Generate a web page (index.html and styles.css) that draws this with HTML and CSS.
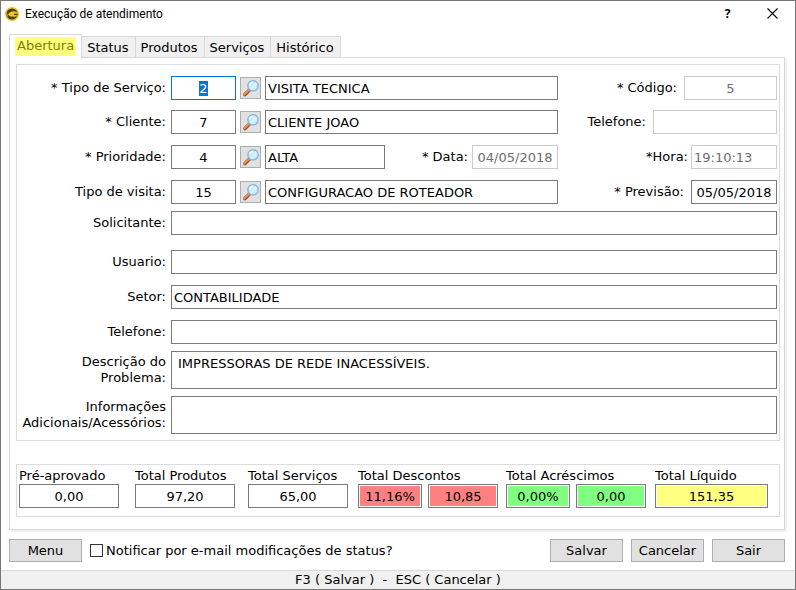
FILE: index.html
```html
<!DOCTYPE html>
<html lang="pt-BR">
<head>
<meta charset="utf-8">
<title>Execução de atendimento</title>
<link rel="stylesheet" href="styles.css">
</head>
<body>
<svg class="defs" aria-hidden="true">
  <defs>
    <linearGradient id="glass" x1="0" y1="0" x2="1" y2="1">
      <stop offset="0" stop-color="#8cc8f6"/>
      <stop offset=".55" stop-color="#d9f4ff"/>
      <stop offset="1" stop-color="#a6e2fb"/>
    </linearGradient>
    <symbol id="lens" viewBox="0 0 17 18">
      <path d="M7 11.4 L3 15.6" stroke="#8a5a48" stroke-width="3.6" stroke-linecap="round"/>
      <path d="M6.2 11.4 L2.4 15.2" stroke="#f28c3a" stroke-width="2.2" stroke-linecap="round"/>
      <path d="M8.2 10.2 L6.8 11.6" stroke="#8f9fc4" stroke-width="2.6"/>
      <circle cx="11" cy="6.8" r="5.2" fill="url(#glass)" stroke="#8fb0de" stroke-width="1.3"/>
      <path d="M7.8 6.6 A3.3 3.3 0 0 1 11 3.5" fill="none" stroke="#f4fcff" stroke-width="1.5"/>
    </symbol>
  </defs>
</svg>
<div class="window">
  <header class="titlebar">
    <svg class="logo" viewBox="0 0 14 14" aria-hidden="true">
      <circle cx="7" cy="7" r="6.3" fill="#45422c" stroke="#f5c518" stroke-width="1.4"/>
      <path d="M3 7.4 C4.4 5 6.4 4.2 8.6 4.2 C11 4.2 12.6 5.4 13.2 6.8 L9.6 6.6 C8.4 6.8 8.6 7.6 9.6 8 L12.6 8.6 C11.6 9.8 9.6 10 8.2 9.4 C6.6 10 4.6 9.4 3 7.4 Z" fill="#f5c826"/>
      <path d="M1.2 5 C2 6.8 2 8 2.6 9.4" fill="none" stroke="#d6a916" stroke-width="1"/>
    </svg>
    <h1>Execução de atendimento</h1>
    <button class="caption" type="button" aria-label="Ajuda">?</button>
    <button class="caption" type="button" aria-label="Fechar"><svg viewBox="0 0 11 11" width="11" height="11"><path d="M.5 .5 L10.5 10.5 M10.5 .5 L.5 10.5" stroke="#000" stroke-width="1.1"/></svg></button>
  </header>

  <form class="content">
    <nav class="tabs">
      <button class="tab active" type="button"><mark>Abertura</mark></button>
      <button class="tab" type="button">Status</button>
      <button class="tab" type="button">Produtos</button>
      <button class="tab" type="button">Serviços</button>
      <button class="tab" type="button">Histórico</button>
    </nav>

    <div class="page">
      <section class="group fields">
        <div class="row">
          <label class="main" for="tipo">* Tipo de Serviço:</label>
          <input class="code current" id="tipo" value="2">
          <button class="find" type="button" aria-label="Buscar tipo de serviço"><svg><use href="#lens"/></svg></button>
          <input class="grow" value="VISITA TECNICA" aria-label="Tipo de serviço">
          <div class="side"><label for="codigo">* Código:</label><input class="num" id="codigo" value="5" disabled></div>
        </div>
        <div class="row gap-m">
          <label class="main" for="cliente">* Cliente:</label>
          <input class="code" id="cliente" value="7">
          <button class="find" type="button" aria-label="Buscar cliente"><svg><use href="#lens"/></svg></button>
          <input class="grow" value="CLIENTE JOAO" aria-label="Nome do cliente">
          <div class="side"><label for="fone1">Telefone:</label><input class="phone" id="fone1" disabled></div>
        </div>
        <div class="row gap-l">
          <label class="main" for="prioridade">* Prioridade:</label>
          <input class="code" id="prioridade" value="4">
          <button class="find" type="button" aria-label="Buscar prioridade"><svg><use href="#lens"/></svg></button>
          <div class="split">
            <input class="level" value="ALTA" aria-label="Prioridade">
            <label for="data">* Data:</label><input class="date" id="data" value="04/05/2018" disabled>
          </div>
          <div class="side tight"><label for="hora">*Hora:</label><input class="date time" id="hora" value="19:10:13" disabled></div>
        </div>
        <div class="row gap-l">
          <label class="main" for="visita">Tipo de visita:</label>
          <input class="code" id="visita" value="15">
          <button class="find" type="button" aria-label="Buscar tipo de visita"><svg><use href="#lens"/></svg></button>
          <input class="grow" value="CONFIGURACAO DE ROTEADOR" aria-label="Tipo de visita">
          <div class="side"><label for="previsao">* Previsão:</label><input class="date" id="previsao" value="05/05/2018"></div>
        </div>
        <div class="row gap-s"><label class="main" for="solicitante">Solicitante:</label><input class="grow" id="solicitante"></div>
        <div class="row gap-xl"><label class="main" for="usuario">Usuario:</label><input class="grow" id="usuario"></div>
        <div class="row gap-l"><label class="main" for="setor">Setor:</label><input class="grow" id="setor" value="CONTABILIDADE"></div>
        <div class="row gap-l"><label class="main" for="fone2">Telefone:</label><input class="grow" id="fone2"></div>
        <div class="row gap-s"><label class="main" for="descricao">Descrição do<br>Problema:</label><textarea class="grow" id="descricao">IMPRESSORAS DE REDE INACESSÍVEIS.</textarea></div>
        <div class="row gap-s"><label class="main" for="info">Informações<br>Adicionais/Acessórios:</label><textarea class="grow" id="info"></textarea></div>
      </section>

      <section class="group totals">
        <div class="total"><label for="t1">Pré-aprovado</label><input id="t1" class="sum" value="0,00"></div>
        <div class="total"><label for="t2">Total Produtos</label><input id="t2" class="sum" value="97,20"></div>
        <div class="total"><label for="t3">Total Serviços</label><input id="t3" class="sum" value="65,00"></div>
        <div class="total"><label for="t4">Total Descontos</label>
          <div class="pair"><input id="t4" class="percent red" value="11,16%"><input class="value red" value="10,85" aria-label="Valor dos descontos"></div></div>
        <div class="total"><label for="t5">Total Acréscimos</label>
          <div class="pair"><input id="t5" class="percent green" value="0,00%"><input class="value green" value="0,00" aria-label="Valor dos acréscimos"></div></div>
        <div class="total"><label for="t6">Total Líquido</label><input id="t6" class="net yellow" value="151,35"></div>
      </section>
    </div>

    <div class="actions">
      <button class="btn" type="button">Menu</button>
      <input type="checkbox" id="notificar"><label class="notify" for="notificar">Notificar por e-mail modificações de status?</label>
      <button class="btn" type="button">Salvar</button>
      <button class="btn" type="button">Cancelar</button>
      <button class="btn" type="button">Sair</button>
    </div>
  </form>

  <footer class="status">F3 ( Salvar )&nbsp; -&nbsp; ESC ( Cancelar )</footer>
</div>
<script src="main.js"></script>
</body>
</html>
```
FILE: main.js
```js
const first = document.getElementById("tipo");
first.focus({ preventScroll: true });
first.select();
```
FILE: styles.css
```css
* { box-sizing: border-box; }

body {
  margin: 0;
  background: #fff;
  color: #000;
  font: 13px/16px "DejaVu Sans", Verdana, sans-serif;
}

.defs { position: absolute; width: 0; height: 0; }

.window {
  display: flex;
  flex-direction: column;
  min-height: 100vh;
  border: 1px solid #777;
}

button, input, textarea { font: inherit; color: inherit; margin: 0; }

/* title bar */
.titlebar {
  display: flex;
  align-items: center;
  height: 25px;
  padding-left: 4px;
}
.logo { width: 14px; height: 14px; margin-right: 6px; }
h1 {
  flex: 1;
  margin: 0;
  font: 12px/16px Roboto, "Segoe UI", sans-serif;
}
.caption {
  width: 45px;
  height: 24px;
  padding: 0;
  border: 0;
  background: none;
  font: bold 12px/16px "Noto Sans", sans-serif;
}
.caption svg { display: block; margin: 0 auto; }

.content { padding: 8px 10px 0 8px; }

/* tabs */
.tabs {
  display: flex;
  align-items: flex-end;
}
.tab {
  height: 21px;
  padding: 2px 6px 0 5px;
  border: 1px solid #d9d9d9;
  border-width: 1px 1px 0 0;
  background: #f0f0f0;
  white-space: nowrap;
}
.tab.active {
  height: 24px;
  margin-bottom: -1px;
  padding: 0 5px;
  border-left-width: 1px;
  background: #fff;
}
.tab mark {
  display: block;
  height: 19px;
  padding: 1px 2px 0;
  background: #ffff80;
  color: #808000;
}

.page {
  padding: 6px 4px 12px 6px;
  border: 1px solid #d9d9d9;
  box-shadow: 2px 2px 0 #f0f0f0;
}
.group { border: 1px solid #dcdcdc; }

/* fields */
.fields { padding: 11px 2px 6px; }
.row { display: flex; align-items: center; }
.gap-s { margin-top: 7px; }
.gap-m { margin-top: 10px; }
.gap-l { margin-top: 11px; }
.gap-xl { margin-top: 15px; }

.main {
  width: 152px;
  padding-right: 5px;
  text-align: right;
  white-space: nowrap;
  display: flex;
  justify-content: flex-end;
}

input:not([type="checkbox"]), textarea {
  height: 24px;
  padding: 0 2px;
  border: 1px solid #7a7a7a;
  border-radius: 0;
  background: #fff;
  outline: 0;
  min-width: 0;
}
input:not([type="checkbox"]):disabled {
  border-color: #ccc;
  color: #6d6d6d;
}
textarea {
  display: block;
  resize: none;
  overflow: hidden;
}
.row textarea { height: 38px; padding: 4px 6px; }
.row .grow { flex: 1; }
.row .level { width: 120px; }
.row .code { width: 65px; text-align: center; }
input.code.current:not([type="checkbox"]) { border-color: #0078d7; }
.current::selection { background: #0078d7; color: #fff; }

.find {
  width: 21px;
  height: 22px;
  margin: 0 4px;
  padding: 1px;
  border: 1px solid #adadad;
  background: #e1e1e1;
}
.find svg { display: block; width: 17px; height: 18px; }

.split { display: flex; flex: 1; align-items: center; }
.split label { margin-left: auto; padding-right: 4px; }
.side {
  display: flex;
  align-items: center;
  justify-content: flex-end;
  gap: 7px;
  width: 219px;
}
.side.tight { gap: 3px; }
.num { width: 93px; text-align: center; }
.phone { width: 124px; }
.date { width: 86px; text-align: center; }
.row .time { text-align: left; }

/* totals */
.totals {
  display: grid;
  grid-template-columns: 116fr 113fr 110fr 148fr 149fr 113fr;
  margin-top: 23px;
  padding: 3px 11px 8px 2px;
}
.total { white-space: nowrap; }
.total label { display: block; }
.total input { display: block; text-align: center; }
.pair { display: flex; gap: 6px; }
.total .sum { width: 100px; }
.total .percent { width: 64px; }
.total .value { width: 70px; }
.total .net { width: 100%; }
.total .red, .total .green, .total .yellow { padding: 1px; background-clip: content-box; }
.total .red { background-color: #ff8080; }
.total .green { background-color: #80ff80; }
.total .yellow { background-color: #ffff80; }

/* actions */
.actions {
  display: flex;
  align-items: center;
  gap: 8px;
  margin: 9px 0 8px;
}
.btn {
  width: 73px;
  height: 23px;
  padding: 0;
  border: 1px solid #adadad;
  background: #e1e1e1;
}
.actions input {
  appearance: none;
  width: 13px;
  height: 13px;
  border: 1px solid #333;
  background: #fff;
}
.notify { flex: 1; margin-left: -5px; }

.status {
  margin-top: auto;
  padding: 1px 0;
  border-top: 1px solid #d9d9d9;
  background: #f0f0f0;
  text-align: center;
}
```
